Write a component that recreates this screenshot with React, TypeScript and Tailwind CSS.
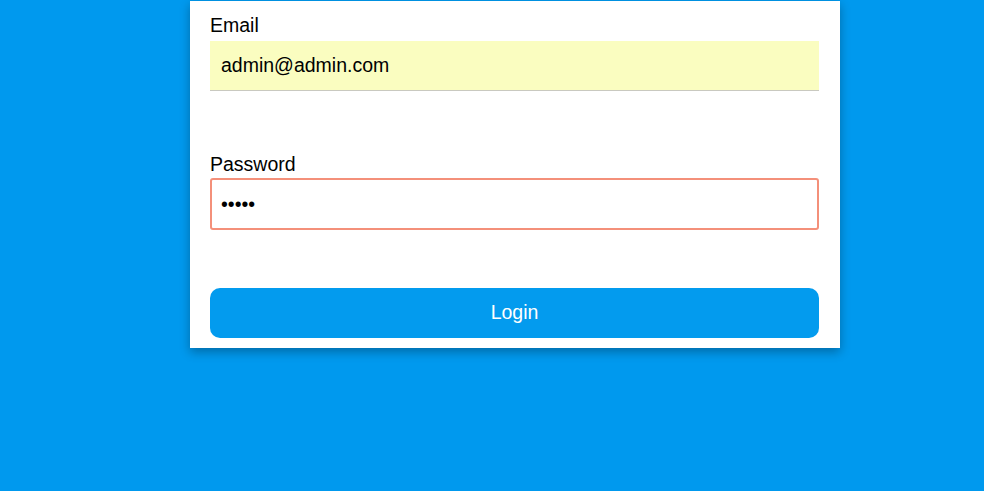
import React, { useState } from "react";

const App = () => {
  const [email, setEmail] = useState("admin@admin.com");
  const [password, setPassword] = useState("admin");

  return (
    <div
      className="min-h-screen w-full bg-[#0099ee] pt-px"
      style={{ fontFamily: '"Liberation Sans", Arial, sans-serif' }}
    >
      <div className="ml-[190px] w-[650px] bg-white pl-5 pr-[21px] pt-[12px] pb-[10px] shadow-[0_4px_10px_rgba(0,0,0,0.3)]">
        <form onSubmit={(e) => e.preventDefault()}>
          <label className="block text-[19.5px] leading-6 text-black mb-[4px]">
            Email
          </label>
          <input
            type="email"
            value={email}
            onChange={(e) => setEmail(e.target.value)}
            className="block h-[50px] w-full bg-[#fafdc0] border-b border-[#c9c9c0] px-[11px] text-[19.5px] text-black outline-none"
          />

          <label className="mt-[61px] block text-[19.5px] leading-6 text-black mb-[2px]">
            Password
          </label>
          <input
            type="password"
            value={password}
            onChange={(e) => setPassword(e.target.value)}
            className="block h-[52px] w-full rounded-[3px] border-2 border-[#f4907a] bg-white px-[9px] text-[19.5px] text-black outline-none"
          />

          <button
            type="submit"
            className="mt-[58px] block h-[50px] w-full rounded-[10px] bg-[#039bee] text-[19.5px] text-white"
          >
            Login
          </button>
        </form>
      </div>
    </div>
  );
};

export default App;
